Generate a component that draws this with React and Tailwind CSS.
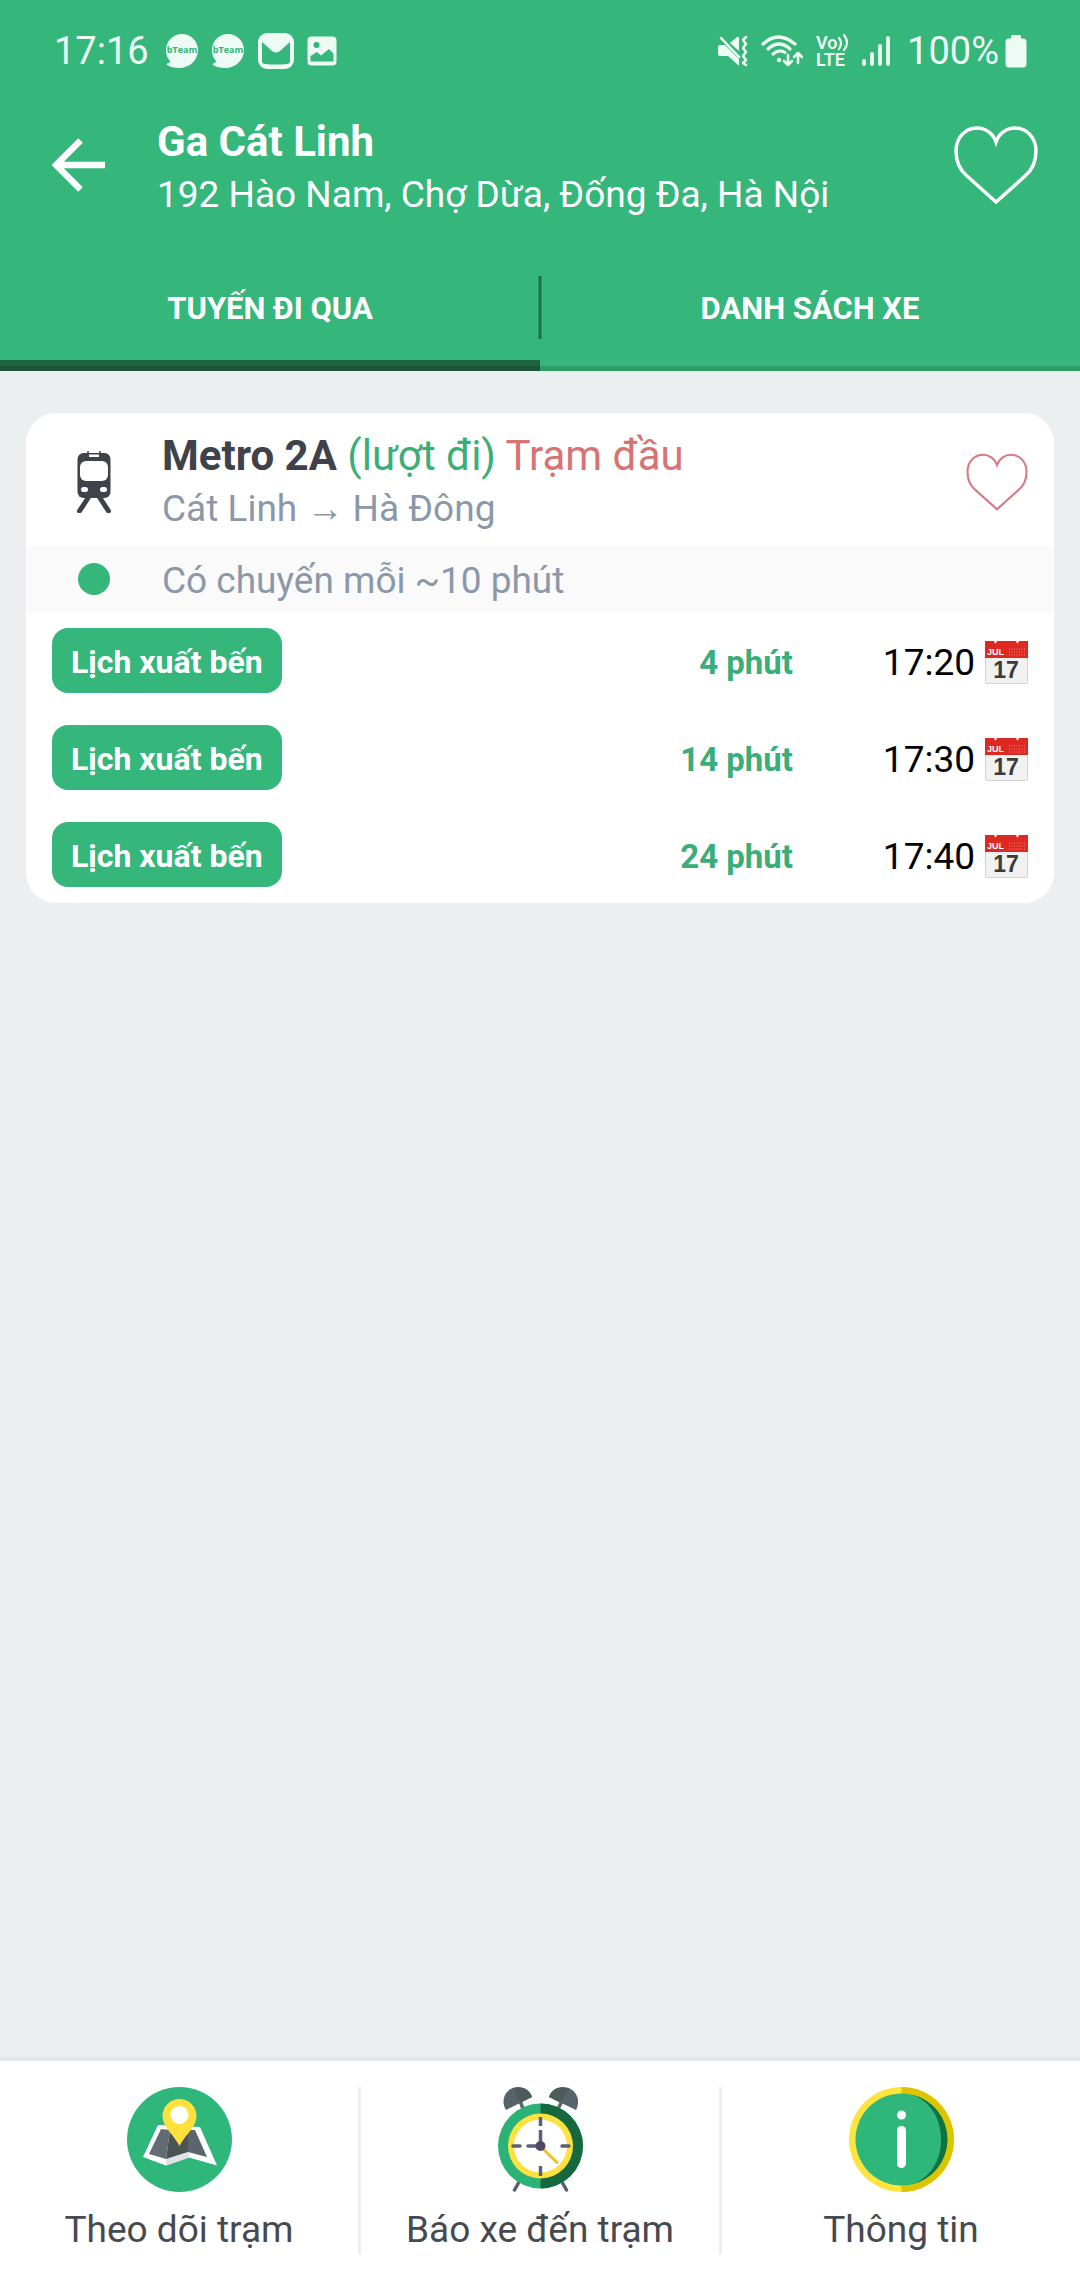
import React from 'react';

const departures = [
  { id: 1, wait: '4 phút', time: '17:20' },
  { id: 2, wait: '14 phút', time: '17:30' },
  { id: 3, wait: '24 phút', time: '17:40' },
];

function ChatIcon() {
  return (
    <svg width="34" height="36" viewBox="0 0 34 36" className="shrink-0" aria-hidden="true">
      <path
        d="M17 1C26 1 33 8 33 17C33 27 25 35 14 35C9 35 5 34 2 32C1 31 2 30 4 30L5 28C2 25 1 21 1 17C1 8 8 1 17 1Z"
        fill="#eefaf4"
      />
      <text x="17" y="20" textAnchor="middle" fontFamily="Open Sans, sans-serif" fontWeight="700" fontSize="9" fill="#35b67a">
        bTeam
      </text>
    </svg>
  );
}

function MailIcon() {
  return (
    <svg width="38" height="38" viewBox="0 0 38 38" className="shrink-0" aria-hidden="true">
      <rect x="1" y="1" width="36" height="36" rx="9" fill="#eefaf4" />
      <path d="M5 10L15 19Q19 22 23 19L33 10V29Q33 32 30 32Q19 33 8 32Q5 32 5 29Z" fill="#35b67a" />
    </svg>
  );
}

function GalleryIcon() {
  return (
    <svg width="30" height="30" viewBox="0 0 30 30" className="shrink-0" aria-hidden="true">
      <rect x="0.500" y="0.500" width="29" height="29" rx="4" fill="#eefaf4" />
      <circle cx="9.500" cy="9" r="3" fill="#35b67a" />
      <path d="M3.500 20L10 16L14 19.500L22 13L26.500 17.500V25.500H3.500Z" fill="#35b67a" />
    </svg>
  );
}

function MuteIcon() {
  return (
    <svg width="32" height="32" viewBox="0 0 32 32" className="shrink-0" aria-hidden="true">
      <path d="M1 12Q1 10 3 10H8L22 24V30Q22 31 21 30L11 21H3Q1 21 1 19Z" fill="#eefaf4" />
      <path d="M13 8L20 2Q22 1 22 3V16Z" fill="#eefaf4" />
      <path d="M4 3L22 22" stroke="#eefaf4" strokeWidth="2.500" strokeLinecap="round" />
      <path d="M29 2L26 5L29 9L26 13L29 17L26 21L29 25L26 28L29 30" fill="none" stroke="#eefaf4" strokeWidth="2.500" strokeLinejoin="round" strokeLinecap="round" />
    </svg>
  );
}

function WifiIcon() {
  return (
    <svg width="42" height="32" viewBox="0 0 42 32" className="shrink-0" aria-hidden="true">
      <g fill="none" stroke="#eefaf4" strokeWidth="3.200" strokeLinecap="round">
        <path d="M2 9Q17 -5 34 9" />
        <path d="M7 14Q18 4 29 14" />
        <path d="M12 19Q18 13.500 24 17.500" />
        <path d="M27 20V29M23 26L27 30L31 26" strokeWidth="2.600" strokeLinejoin="round" />
        <path d="M37 28V19M33 22L37 18L41 22" strokeWidth="2.600" strokeLinejoin="round" />
      </g>
      <circle cx="18" cy="25" r="2.200" fill="#eefaf4" />
    </svg>
  );
}

function VolteIcon() {
  return (
    <svg width="34" height="42" viewBox="0 0 34 42" className="shrink-0" aria-hidden="true">
      <g fontFamily="Roboto, sans-serif" fontWeight="600" fill="#eefaf4">
        <text x="1" y="19" fontSize="18">Vo</text>
        <text x="1" y="36" fontSize="18">LTE</text>
      </g>
      <path d="M24 8Q28 13 24 19M29 5Q35 13 29 20" fill="none" stroke="#eefaf4" strokeWidth="2.200" strokeLinecap="round" />
    </svg>
  );
}

function SignalIcon() {
  return (
    <svg width="30" height="30" viewBox="0 0 30 30" className="shrink-0" aria-hidden="true">
      <g stroke="#eefaf4" strokeWidth="3.800" strokeLinecap="round">
        <path d="M3 25V28M11 18V28M19 10V28M27 2V28" />
      </g>
    </svg>
  );
}

function BatteryIcon() {
  return (
    <svg width="22" height="34" viewBox="0 0 22 34" className="shrink-0" aria-hidden="true">
      <path d="M6 2Q6 1 7 1H15Q16 1 16 2V4.500H18Q21.500 4.500 21.500 8V30Q21.500 33.500 18 33.500H4Q0.500 33.500 0.500 30V8Q0.500 4.500 4 4.500H6Z" fill="#eefaf4" />
    </svg>
  );
}

function HeartIcon({ className, strokeWidth }) {
  return (
    <svg viewBox="0 0 84 78" className={className} aria-hidden="true">
      <path
        d="M42 16C39 7 31 2 23 2C11 2 2 12 2 25C2 36 7 45 13 50L42 76L71 50C77 45 82 36 82 25C82 12 73 2 61 2C53 2 45 7 42 16Z"
        fill="none"
        stroke="currentColor"
        strokeWidth={strokeWidth}
      />
    </svg>
  );
}

function TrainIcon() {
  return (
    <svg width="34" height="62" viewBox="0 0 34 62" className="shrink-0" aria-hidden="true">
      <path d="M11 0V4M23 0V4" stroke="#3f424a" strokeWidth="1.500" />
      <rect x="0.500" y="2" width="33" height="45" rx="6" fill="#3f424a" />
      <rect x="12" y="3.500" width="10" height="2.500" fill="#fff" />
      <rect x="3" y="10" width="28" height="20" rx="6" fill="#fff" />
      <rect x="4" y="36" width="7" height="5" rx="2.500" fill="#fff" />
      <rect x="23" y="36" width="7" height="5" rx="2.500" fill="#fff" />
      <path d="M11 47L2.500 60M23 47L31.500 60" stroke="#3f424a" strokeWidth="5" strokeLinecap="round" />
    </svg>
  );
}

function CalendarIcon() {
  return (
    <svg width="43" height="44" viewBox="0 0 43 44" className="shrink-0" aria-hidden="true">
      <rect x="0.500" y="1" width="42" height="41.500" rx="1" fill="#f1f1f1" stroke="#d3d3d3" />
      <path d="M0 0H9Q10.500 5 12 0H31Q32.500 5 34 0H43V17H0Z" fill="#dc2a23" />
      <path d="M24 8H40M24 11H40M24 14H40" stroke="#f0837c" strokeWidth="1" strokeDasharray="1 1.500" />
      <g fontWeight="700" fontFamily="Liberation Sans, sans-serif">
        <text x="2" y="14" fontSize="9" fill="#fff">JUL</text>
        <text x="21" y="37" fontSize="23" textAnchor="middle" fill="#3b3b3b">17</text>
      </g>
    </svg>
  );
}

function MapIcon() {
  return (
    <svg width="105" height="105" viewBox="0 0 105 105" aria-hidden="true">
      <circle cx="52.500" cy="52.500" r="52.500" fill="#2fb77b" />
      <path d="M31 38L73 40L90 78.500L62 70.500L39 78.500L16 70Z" fill="#fff" />
      <path d="M39 72L62 65V70.500L39 78.500Z" fill="#dfe1e4" />
      <path d="M34 42L43 43L39 72L22 67Z" fill="#636b73" />
      <path d="M43 43H61V65L39 72Z" fill="#4a5455" />
      <path d="M61 43H68L80 70L61 65Z" fill="#5c646d" />
      <path d="M52.500 59C47 48 35.500 40 35.500 29A17 17 0 0 1 69.500 29C69.500 40 58 48 52.500 59Z" fill="#fee03f" />
      <circle cx="52.500" cy="28" r="9" fill="#fff" />
    </svg>
  );
}

function AlarmIcon() {
  return (
    <svg width="85" height="105" viewBox="0 0 85 105" aria-hidden="true">
      <path d="M22 14L26 24M64 14L59 24" stroke="#5c6570" strokeWidth="3.500" />
      <path d="M21 95L16.500 103M64 95L68.500 103" stroke="#5b6175" strokeWidth="3.500" strokeLinecap="round" />
      <path d="M8 23C1 11 10 0 20 0C27 0 32 4 34 10Z" fill="#57636a" />
      <path d="M15 2C22 -2 32 2 34 10L22 16Z" fill="#4c5c5b" />
      <path d="M78 23C84 11 76 0 65 0C58 0 53 4 51 10Z" fill="#57636a" />
      <path d="M70 2C63 -2 53 2 51 10L63 16Z" fill="#4c5c5b" />
      <circle cx="42.500" cy="59" r="42.500" fill="#2bb276" />
      <path d="M42.500 16.500A42.500 42.500 0 0 1 42.500 101.500Z" fill="#16683f" />
      <circle cx="42.500" cy="59" r="32.500" fill="#fde13f" />
      <circle cx="42.500" cy="59" r="26.500" fill="#fff" />
      <g stroke="#5b6175" strokeWidth="3.500">
        <path d="M42.500 30V39M42.500 79V89M42.500 43V59" />
        <path d="M15 59H22M64 59H71M30 59H42" strokeLinecap="round" />
      </g>
      <path d="M44 61L59 75.500" stroke="#f4bd23" strokeWidth="3" strokeLinecap="round" />
      <circle cx="42.500" cy="59" r="5" fill="#524965" />
    </svg>
  );
}

function InfoIcon() {
  return (
    <svg width="105" height="105" viewBox="0 0 105 105" aria-hidden="true">
      <circle cx="52.500" cy="52.500" r="52.500" fill="#fde43f" />
      <path d="M52.500 0A52.500 52.500 0 0 1 52.500 105Z" fill="#ddc400" />
      <circle cx="52.500" cy="52.500" r="46" fill="#2fb77b" />
      <path d="M62 7.500A46 46 0 0 1 62 97.500C80 92 92 75 92 52.500C92 30 80 13 62 7.500Z" fill="#10733f" />
      <circle cx="52.500" cy="28" r="4.500" fill="#fff" />
      <rect x="48" y="39" width="9" height="42" rx="4.500" fill="#fff" />
    </svg>
  );
}

const actions = [
  { label: 'Theo dõi trạm', icon: <MapIcon /> },
  { label: 'Báo xe đến trạm', icon: <AlarmIcon /> },
  { label: 'Thông tin', icon: <InfoIcon /> },
];

function StatusBar() {
  return (
    <div className="flex h-[100px] items-center pl-[54px] pr-[53px] pt-[2px] text-[38px] leading-[48px] text-[#eefaf4]">
      <span className="mr-4">17:16</span>
      <div className="flex items-center gap-3">
        <ChatIcon />
        <ChatIcon />
        <MailIcon />
        <GalleryIcon />
      </div>
      <div className="ml-auto flex items-center">
        <div className="mr-4 flex items-center gap-3">
          <MuteIcon />
          <WifiIcon />
          <VolteIcon />
          <SignalIcon />
        </div>
        <span className="mr-[6px]">100%</span>
        <BatteryIcon />
      </div>
    </div>
  );
}

function Header() {
  return (
    <header className="bg-[#35b67a] text-white">
      <StatusBar />
      <div className="flex h-[130px] items-center pl-[52px] pr-[42px]">
        <button type="button" aria-label="Quay lại" className="mr-[51px] shrink-0">
          <svg width="54" height="54" viewBox="0 0 54 54" className="block" aria-hidden="true">
            <path d="M28.500 2.500L4 27L28.500 51.500M4 27H53" fill="none" stroke="#fff" strokeWidth="6.500" />
          </svg>
        </button>
        <div className="flex flex-1 flex-col gap-1 pt-[6px]">
          <h1 className="text-[42px] font-bold leading-[50px]">Ga Cát Linh</h1>
          <p className="text-[37px] leading-[48px]">192 Hào Nam, Chợ Dừa, Đống Đa, Hà Nội</p>
        </div>
        <button type="button" aria-label="Yêu thích trạm" className="shrink-0">
          <HeartIcon className="block h-[78px] w-[84px]" strokeWidth="3.500" />
        </button>
      </div>
      <div role="tablist" className="relative mt-5 flex text-[31px] font-bold">
        <button
          type="button"
          role="tab"
          aria-selected="true"
          className="h-[121px] flex-1 pb-[3px] shadow-[inset_0_-5px_#1d5439,inset_0_-11px_#1d6641]"
        >
          TUYẾN ĐI QUA
        </button>
        <button type="button" role="tab" aria-selected="false" className="h-[121px] flex-1 pb-[3px] shadow-[inset_0_-5px_#2d9d68]">
          DANH SÁCH XE
        </button>
        <span className="absolute left-1/2 top-[26px] h-[63px] w-[3px] -translate-x-1/2 bg-[#1d6f48]" />
      </div>
    </header>
  );
}

function RouteCard() {
  return (
    <section className="overflow-hidden rounded-[30px] bg-white">
      <div className="flex h-[133px] items-center pl-[51px] pr-[26px] pt-[5px]">
        <TrainIcon />
        <div className="ml-[51px] flex flex-1 flex-col gap-1">
          <h2 className="text-[42px] leading-[50px] text-[#3f424a]">
            <span className="font-bold">Metro 2A</span> <span className="text-[#3aae78]">(lượt đi)</span>{' '}
            <span className="text-[#d97373]">Trạm đầu</span>
          </h2>
          <p className="text-[37px] leading-[48px] text-[#8b98a9]">Cát Linh → Hà Đông</p>
        </div>
        <button type="button" aria-label="Yêu thích tuyến" className="shrink-0 text-[#d97882]">
          <HeartIcon className="block h-[58px] w-[62px]" strokeWidth="2.800" />
        </button>
      </div>
      <div className="flex h-[66px] items-center bg-[#fafafa] pl-[52px]">
        <span className="size-8 rounded-full bg-[#35b67a]" />
        <p className="ml-[52px] pt-1 text-[37px] leading-[48px] text-[#8b98a9]">Có chuyến mỗi ~10 phút</p>
      </div>
      <ul>
        {departures.map((item) => (
          <li key={item.id} className="flex h-[97px] items-center px-[26px]">
            <button type="button" className="h-[65px] rounded-2xl bg-[#35b67a] px-[19px] pt-[2px] text-[32px] font-bold text-white">
              Lịch xuất bến
            </button>
            <span className="flex-1 pt-1 text-right text-[33px] font-bold text-[#3aae78]">{item.wait}</span>
            <span className="flex w-[235px] items-center justify-end gap-[10px] pt-1 text-[37px] leading-[48px] text-black">
              <time>{item.time}</time>
              <CalendarIcon />
            </span>
          </li>
        ))}
      </ul>
    </section>
  );
}

function BottomBar() {
  return (
    <nav className="flex border-t-4 border-[#e4e7e8] bg-white pb-[26px] pt-[26px]">
      {actions.map((action, index) => (
        <React.Fragment key={action.label}>
          {index > 0 && <span className="w-[3px] bg-[#efefef]" />}
          <button type="button" className="flex flex-1 flex-col items-center gap-[14px] text-[37px] leading-[48px] text-[#46494f]">
            {action.icon}
            <span>{action.label}</span>
          </button>
        </React.Fragment>
      ))}
    </nav>
  );
}

function App() {
  return (
    <div className="flex min-h-screen flex-col bg-[#ebeff0] font-['Roboto',sans-serif]">
      <Header />
      <main className="flex-1 px-[26px] pt-[42px]">
        <RouteCard />
      </main>
      <BottomBar />
    </div>
  );
}

export default App;
